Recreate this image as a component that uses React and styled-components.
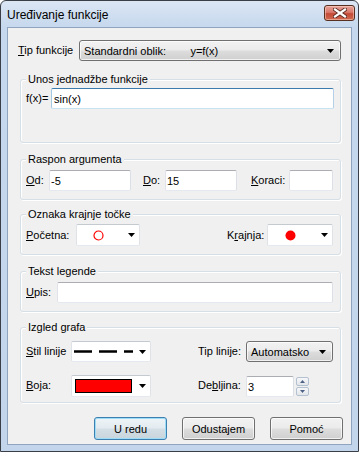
import React from "react";
import styled, { createGlobalStyle } from "styled-components";

const GlobalStyle = createGlobalStyle`
  html, body { margin: 0; padding: 0; background: #fff; }
  body {
    font-family: "Liberation Sans", Arial, sans-serif;
    font-size: 11px;
    color: #000;
  }
  * { box-sizing: border-box; }
`;

const Window = styled.div`
  width: 359px;
  height: 452px;
  border: 1px solid #3a3f47;
  border-radius: 6px 6px 0 0;
  background: linear-gradient(#dbe6f4 0, #c6d8ed 26px, #c2d5ea 100%);
  display: flex;
  flex-direction: column;
  padding: 0 6px 6px 6px;
`;

const TitleBar = styled.div`
  height: 26px;
  flex: none;
  display: flex;
  align-items: flex-start;
  justify-content: space-between;
`;

const Title = styled.div`
  font-size: 12px;
  line-height: 14px;
  padding-top: 7px;
  margin-left: 0;
`;

const CloseButton = styled.div`
  width: 31px;
  height: 16px;
  margin-top: 4px;
  margin-right: -3px;
  border: 1px solid #57301f;
  border-radius: 3px;
  background: linear-gradient(#e6a398 0, #d9796b 45%, #c44a36 55%, #cf6a50 100%);
  box-shadow: inset 0 0 0 1px rgba(255, 220, 210, 0.5);
  display: flex;
  align-items: center;
  justify-content: center;
`;

const Client = styled.div`
  flex: 1;
  background: #f0f0f0;
  border: 1px solid #8fa5bf;
  padding: 12px 10px 0 12px;
`;

const TopRow = styled.div`
  display: flex;
  align-items: center;
  margin-left: -2px;
`;

const Label = styled.span`
  flex: none;
  width: ${(p) => p.$w}px;
  margin-left: ${(p) => p.$ml || 0}px;
  white-space: nowrap;
  line-height: 13px;
`;

const ComboButton = styled.div`
  width: ${(p) => p.$w}px;
  height: 21px;
  border: 1px solid #707070;
  border-radius: 3px;
  background: linear-gradient(#f2f2f2 0, #ebebeb 48%, #dddddd 52%, #cfcfcf 100%);
  box-shadow: inset 0 0 0 1px rgba(255, 255, 255, 0.7);
  display: flex;
  align-items: center;
  padding: 0 6px 0 4px;
`;

const ComboText = styled.span`
  flex: 1;
  white-space: pre;
`;

const Group = styled.div`
  height: ${(p) => p.$h}px;
  margin-top: ${(p) => p.$mt}px;
  border: 1px solid #d5dfe5;
  border-radius: 3px;
  box-shadow: inset 1px 1px 0 #fff, 1px 1px 0 #fff;
  padding: 0 6px 0 5px;
`;

const GroupTitle = styled.div`
  display: table;
  margin-top: -7px;
  padding: 0 2px;
  line-height: 13px;
  background: #f0f0f0;
`;

const Row = styled.div`
  display: flex;
  align-items: center;
  margin-top: ${(p) => p.$mt}px;
`;

const TextBox = styled.input`
  flex: none;
  width: ${(p) => p.$w}px;
  height: 21px;
  margin: ${(p) => p.$mt || 0}px 0 0 0;
  padding: 0 ${(p) => p.$pl || 1}px;
  font: inherit;
  color: #000;
  background: #fff;
  border: 1px solid;
  border-color: ${(p) =>
    p.$focus ? "#3d7bad #b5cfe7 #c7e2f1 #a4c9e3" : "#abadb3 #dbdfe6 #e3e9ef #e2e3ea"};
  border-radius: 2px;
  outline: none;
`;

const Drop = styled.div`
  flex: none;
  width: ${(p) => p.$w}px;
  height: ${(p) => p.$h || 22}px;
  background: #fff;
  border: 1px solid;
  border-color: #c5cad1 #dfe3e8 #e3e9ef #dfe3e8;
  border-radius: 2px;
  display: flex;
  align-items: center;
  padding: 0 4px 0 ${(p) => p.$pl}px;
`;

const DropBody = styled.div`
  flex: 1;
  display: flex;
  align-items: center;
`;

const Swatch = styled.div`
  width: 57px;
  height: 14px;
  background: #ff0000;
  border: 1px solid #000;
`;

const Spinner = styled.div`
  flex: none;
  width: 13px;
  height: 19px;
  margin-left: 2px;
  margin-top: 1px;
  display: flex;
  flex-direction: column;
  gap: 1px;
`;

const SpinButton = styled.div`
  flex: 1;
  border: 1px solid #b4c1d0;
  border-radius: 2px;
  background: linear-gradient(#f6f7f9, #e3e6ea);
  display: flex;
  align-items: center;
  justify-content: center;
`;

const ButtonRow = styled.div`
  display: flex;
  justify-content: flex-end;
  gap: 15px;
  margin-top: 14px;
  margin-right: -2px;
`;

const Button = styled.div`
  width: 73px;
  height: 23px;
  border: 1px solid ${(p) => (p.$default ? "#3c7fb1" : "#707070")};
  border-radius: 3px;
  background: ${(p) =>
    p.$default
      ? "linear-gradient(#eef4f7 0, #e3ebf0 48%, #d3dee5 52%, #c9d5dc 100%)"
      : "linear-gradient(#f2f2f2 0, #ebebeb 48%, #dddddd 52%, #cfcfcf 100%)"};
  box-shadow: inset 0 0 0 1px ${(p) => (p.$default ? "#9fdcf6" : "rgba(255,255,255,0.7)")};
  display: flex;
  align-items: center;
  justify-content: center;
`;

const Arrow = () => (
  <svg width="7" height="4" viewBox="0 0 7 4">
    <path d="M0 0h7L3.5 4z" fill="#000" />
  </svg>
);

const SmallArrow = ({ up }) => (
  <svg width="5" height="3" viewBox="0 0 5 3">
    <path d={up ? "M0 3h5L2.5 0z" : "M0 0h5L2.5 3z"} fill="#4d6185" />
  </svg>
);

const CloseX = () => (
  <svg width="14" height="10" viewBox="0 0 14 10">
    <path d="M2 1.5L12 8.5M12 1.5L2 8.5" stroke="#5a2b22" strokeWidth="4" strokeLinecap="square" />
    <path d="M2 1.5L12 8.5M12 1.5L2 8.5" stroke="#fff" strokeWidth="2.2" strokeLinecap="square" />
  </svg>
);

export default function App() {
  return (
    <>
      <GlobalStyle />
      <Window>
        <TitleBar>
          <Title>Uređivanje funkcije</Title>
          <CloseButton>
            <CloseX />
          </CloseButton>
        </TitleBar>
        <Client>
          <TopRow>
            <Label $w={61}>
              <u>T</u>ip funkcije
            </Label>
            <ComboButton $w={262}>
              <ComboText>Standardni oblik:        y=f(x)</ComboText>
              <Arrow />
            </ComboButton>
          </TopRow>

          <Group $h={64} $mt={18}>
            <GroupTitle>Unos jednadžbe funkcije</GroupTitle>
            <Row $mt={2}>
              <Label $w={25}>f(x)=</Label>
              <TextBox $w={283} $pl={2} $focus defaultValue="sin(x)" />
            </Row>
          </Group>

          <Group $h={41} $mt={16}>
            <GroupTitle>Raspon argumenta</GroupTitle>
            <Row $mt={4}>
              <Label $w={23}>
                <u>O</u>d:
              </Label>
              <TextBox $w={82} defaultValue="-5" />
              <Label $w={22} $ml={12}>
                <u>D</u>o:
              </Label>
              <TextBox $w={72} defaultValue="15" />
              <Label $w={38} $ml={14}>
                <u>K</u>oraci:
              </Label>
              <TextBox $w={44} defaultValue="" />
            </Row>
          </Group>

          <Group $h={41} $mt={14}>
            <GroupTitle>Oznaka krajnje točke</GroupTitle>
            <Row $mt={3}>
              <Label $w={50}>
                <u>P</u>očetna:
              </Label>
              <Drop $w={64} $pl={16}>
                <DropBody>
                  <svg width="11" height="11" viewBox="0 0 11 11">
                    <circle cx="5.5" cy="5.5" r="4.5" fill="none" stroke="#ff0000" strokeWidth="1.2" />
                  </svg>
                </DropBody>
                <Arrow />
              </Drop>
              <Label $w={40} $ml={87}>
                K<u>r</u>ajnja:
              </Label>
              <Drop $w={66} $pl={17}>
                <DropBody>
                  <svg width="11" height="11" viewBox="0 0 11 11">
                    <circle cx="5.5" cy="5.5" r="5" fill="#ff0000" />
                  </svg>
                </DropBody>
                <Arrow />
              </Drop>
            </Row>
          </Group>

          <Group $h={41} $mt={16}>
            <GroupTitle>Tekst legende</GroupTitle>
            <Row $mt={4}>
              <Label $w={31}>
                <u>U</u>pis:
              </Label>
              <TextBox $w={276} defaultValue="" />
            </Row>
          </Group>

          <Group $h={76} $mt={15}>
            <GroupTitle>Izgled grafa</GroupTitle>
            <Row $mt={7}>
              <Label $w={45}>
                <u>S</u>til linije
              </Label>
              <Drop $w={80} $h={21} $pl={2}>
                <DropBody>
                  <svg width="60" height="3" viewBox="0 0 60 3">
                    <line x1="0" y1="1.5" x2="59" y2="1.5" stroke="#000" strokeWidth="2.4" strokeDasharray="18 7" />
                  </svg>
                </DropBody>
                <Arrow />
              </Drop>
              <Label $w={48} $ml={47}>
                Tip linije:
              </Label>
              <ComboButton $w={87}>
                <ComboText>Automatsko</ComboText>
                <Arrow />
              </ComboButton>
            </Row>
            <Row $mt={12}>
              <Label $w={45}>
                <u>B</u>oja:
              </Label>
              <Drop $w={80} $pl={3}>
                <DropBody>
                  <Swatch />
                </DropBody>
                <Arrow />
              </Drop>
              <Label $w={48} $ml={47}>
                De<u>b</u>ljina:
              </Label>
              <TextBox $w={48} $mt={2} defaultValue="3" />
              <Spinner>
                <SpinButton>
                  <SmallArrow up />
                </SpinButton>
                <SpinButton>
                  <SmallArrow />
                </SpinButton>
              </Spinner>
            </Row>
          </Group>

          <ButtonRow>
            <Button $default>U redu</Button>
            <Button>Odustajem</Button>
            <Button>Pomoć</Button>
          </ButtonRow>
        </Client>
      </Window>
    </>
  );
}
